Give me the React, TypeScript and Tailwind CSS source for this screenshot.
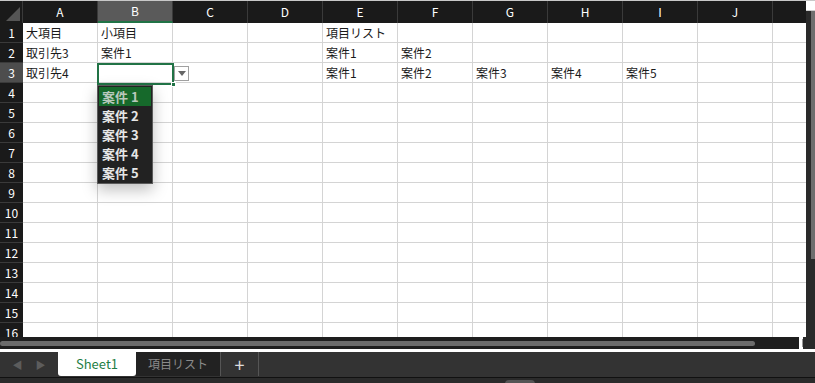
const cols = ['A', 'B', 'C', 'D', 'E', 'F', 'G', 'H', 'I', 'J', '']

const data: Record<number, string[]> = {
  1: ['大項目', '小項目', '', '', '項目リスト'],
  2: ['取引先3', '案件1', '', '', '案件1', '案件2'],
  3: ['取引先4', '', '', '', '案件1', '案件2', '案件3', '案件4', '案件5'],
}

const options = ['案件 1', '案件 2', '案件 3', '案件 4', '案件 5']

const font = { fontFamily: '"Noto Sans CJK JP", "Liberation Sans", sans-serif' }

export default function App() {
  const rows = Array.from({ length: 16 }, (_, i) => i + 1)
  return (
    <div className="w-[815px] h-[383px] bg-[#2b2b2b] flex flex-col overflow-hidden" style={font}>
      <div className="flex h-[337px] border-t border-[#c8c8c8]">
        {/* sheet */}
        <div className="relative w-[806px] h-[336px] overflow-hidden bg-white">
          <div className="flex h-[22px] bg-[#1a1a1a] text-[12px] text-white">
            <div className="w-[23px] shrink-0 border-r border-[#3a3a3a] relative">
              <div className="absolute right-[2px] bottom-[2px] w-0 h-0 border-l-[14px] border-l-transparent border-b-[14px] border-b-[#555]" />
            </div>
            {cols.map((c, i) => (
              <div
                key={i}
                className={
                  c === 'B'
                    ? 'w-[75px] shrink-0 flex items-center justify-center bg-[#5a5a5a] border-r border-[#3a3a3a] border-b-2 border-b-[#217346]'
                    : 'w-[75px] shrink-0 flex items-center justify-center border-r border-[#3a3a3a]'
                }
              >
                {c}
              </div>
            ))}
          </div>
          {rows.map((r) => (
            <div key={r} className="flex h-[20px] text-[12px]">
              <div
                className={
                  r === 3
                    ? 'w-[23px] shrink-0 flex items-center justify-center bg-[#4d4d4d] text-white border-b border-[#3a3a3a]'
                    : 'w-[23px] shrink-0 flex items-center justify-center bg-[#1a1a1a] text-white border-b border-[#3a3a3a]'
                }
              >
                {r}
              </div>
              {cols.map((_, i) => (
                <div
                  key={i}
                  className="w-[75px] shrink-0 border-r border-b border-[#d4d4d4] pl-[3px] flex items-center text-[#1a1a1a] leading-none"
                >
                  {data[r]?.[i] ?? ''}
                </div>
              ))}
            </div>
          ))}

          {/* selected cell B3 */}
          <div className="absolute left-[97px] top-[62px] w-[77px] h-[22px] border-2 border-[#217346]" />
          <div className="absolute left-[171px] top-[81px] w-[5px] h-[5px] bg-[#217346] border border-white" />

          {/* dropdown arrow button */}
          <div className="absolute left-[174px] top-[65px] w-[15px] h-[15px] bg-white border border-[#a0a0a0] flex items-center justify-center">
            <div className="w-0 h-0 border-l-[4px] border-r-[4px] border-t-[5px] border-l-transparent border-r-transparent border-t-[#666]" />
          </div>

          {/* dropdown list */}
          <div className="absolute left-[97px] top-[84px] w-[56px] bg-[#222] border border-[#5a5a5a] p-[1px] shadow-[0_6px_14px_rgba(0,0,0,0.25)]">
            {options.map((o, i) => (
              <div
                key={o}
                className={
                  i === 0
                    ? 'h-[19px] flex items-center pl-[3px] bg-[#16692b] text-[#b8c8bc] text-[13px] font-semibold whitespace-nowrap'
                    : 'h-[19px] flex items-center pl-[3px] text-[#e6e6e6] text-[13px] font-semibold whitespace-nowrap'
                }
              >
                {o}
              </div>
            ))}
          </div>
        </div>

        {/* vertical scrollbar */}
        <div className="w-[9px] flex flex-col bg-white">
          <div className="h-[8px] border-b border-[#cfcfcf] mt-[2px]" />
          <div className="flex-1 bg-[#2a2a2a] flex justify-end">
            <div className="w-[4px] h-[248px] bg-[#6e6e6e]" />
          </div>
        </div>
      </div>

      {/* horizontal scrollbar */}
      <div className="flex h-[12px] bg-white">
        <div className="w-[799px] bg-[#1e1e1e] flex items-center">
          <div className="w-[755px] h-[5px] bg-[#6b6b6b] rounded-full" />
        </div>
        <div className="w-[3px] bg-white" />
        <div className="w-px bg-[#999] my-[2px]" />
        <div className="flex-1 bg-[#2a2a2a]" />
      </div>
      <div className="h-[3px] bg-white" />

      {/* sheet tabs */}
      <div className="flex h-[26px] bg-[#333] border-b border-[#111]">
        <div className="w-[58px] flex items-center justify-around px-[6px] text-[#5c5c5c] text-[10px]">
          <span>◀</span>
          <span>▶</span>
        </div>
        <div className="w-[78px] h-[24px] bg-white rounded-b-[3px] flex items-center justify-center text-[13px] text-[#1e7e45]">
          Sheet1
        </div>
        <div className="w-[85px] h-[24px] bg-[#222] flex items-center justify-center text-[12px] text-[#8a8a8a] border-r border-[#555]">
          項目リスト
        </div>
        <div className="w-[38px] h-[24px] flex items-center justify-center text-[18px] text-[#ddd] border-r border-[#555]">
          +
        </div>
      </div>
      <div className="flex-1 bg-[#2b2b2b] relative">
        <div className="absolute left-[505px] top-[2px] w-[30px] h-[6px] rounded-t bg-[#555]" />
      </div>
    </div>
  )
}
